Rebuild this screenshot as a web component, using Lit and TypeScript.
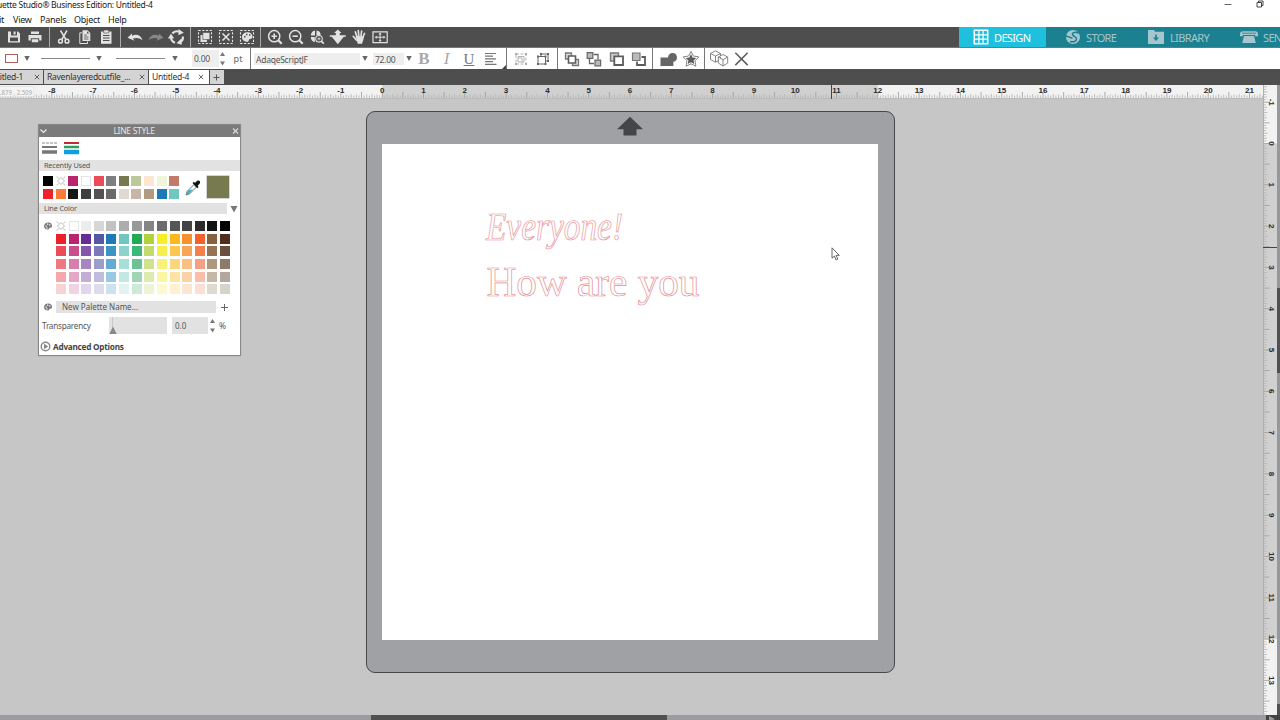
import { LitElement, html, svg, css } from "lit";
import { customElement, property } from "lit/decorators.js";

const UNIT = 41.3;

// Icon artwork on a 20x20 grid, drawn in currentColor.
const ICONS: Record<string, unknown> = {
  save: svg`<path fill="currentColor" fill-rule="evenodd" d="M4 4.500h10l2 2v9H4zM7 4.500v4h6v-4h-1.400v3h-2v-3zM6 10.500v3.800h8v-3.800z"/>`,
  print: svg`<path fill="currentColor" d="M6 4.500h8v2.500H6zM3.500 8h13v5.500h-2.300v-2.200H5.800v2.200H3.500zM6.800 12.300h6.400v3H6.800z"/>`,
  cut: svg`<g fill="none" stroke="currentColor" stroke-width="1.500"><path d="M6.500 3.500l5.700 9.500M13 3.500l-5.500 9.500"/><circle cx="6.500" cy="14.200" r="1.900"/><circle cx="13" cy="14.200" r="1.900"/></g>`,
  copy: svg`<path fill="currentColor" fill-rule="evenodd" d="M7.500 3.300h5l2.800 2.800V14H7.500zM12 4.300v2.300h2.300z"/><path fill="none" stroke="currentColor" d="M7 5.800H4.800v10.700h7.700v-2"/><path stroke="#4e4e4e" stroke-width=".8" d="M9 8h3M9 10h4.500M9 12h4.500"/>`,
  paste: svg`<path fill="currentColor" d="M5 4.500h10.500v12.300H5z"/><path fill="currentColor" stroke="#4e4e4e" stroke-width=".6" d="M7.700 3h5v3h-5z"/><path stroke="#4e4e4e" d="M7 8.500h6.500M7 11h6.500M7 13.500h6.500"/>`,
  undo: svg`<path fill="currentColor" d="M2.500 10.800L7 6.500v2.200c4.500-2 8.800-.5 10.500 4.600-3.200-2.700-6.500-2.800-9.500-1.700l1.500 2.200z"/>`,
  redo: svg`<path fill="currentColor" d="M17.500 10.800L13 6.500v2.200c-4.500-2-8.800-.5-10.500 4.600 3.200-2.700 6.500-2.800 9.500-1.700l-1.500 2.200z"/>`,
  sync: svg`<g fill="none" stroke="currentColor" stroke-width="2.200"><path d="M5.300 6.500A6 6 0 0 1 12 4.700M15.900 9.500a6 6 0 0 1-3.400 6M8 15.700a6 6 0 0 1-4-5.200"/></g><path fill="currentColor" d="M11.500 2l5.300 3.800-5.300 2.500zM14.300 11.500l-4.800 4.700 5.300 1.600zM.9 11.600l3-4.800 3.300 4.500z"/>`,
  selall: svg`<path fill="none" stroke="currentColor" stroke-width="1.100" stroke-dasharray="2.200 1.500" d="M3.500 3.500h13v13h-13z"/><path fill="currentColor" d="M5.500 8h6.500v7H5.500z"/><path fill="currentColor" stroke="#4e4e4e" stroke-width=".6" d="M7.800 5.500h7v7h-7z"/>`,
  selnone: svg`<path fill="none" stroke="currentColor" stroke-width="1.100" stroke-dasharray="2.200 1.500" d="M3.500 3.500h13v13h-13z"/><path stroke="currentColor" stroke-width="1.600" d="M6.500 6.500l7 7M13.500 6.500l-7 7"/>`,
  selcolor: svg`<path fill="none" stroke="currentColor" stroke-width="1.100" stroke-dasharray="2.200 1.500" d="M3.500 3.500h13v13h-13z"/><path fill="currentColor" fill-rule="evenodd" d="M5 10.200C5 7 7.500 5.200 10.500 5.200s5 2 5 4.500c0 1.800-1.200 2.200-2.500 2.200-1.600 0-.8 2.800-2.500 2.800C7.500 14.700 5 13 5 10.200zM7 9h1.500v1.500H7zM9 6.700h1.500v1.500H9zM12 7.200h1.500v1.500H12z"/>`,
  zoomin: svg`<g fill="none" stroke="currentColor"><circle cx="9.200" cy="9.200" r="5.600" stroke-width="1.500"/><path stroke-width="2.200" d="M13.300 13.300l3.400 3.400"/><path stroke-width="1.600" d="M6.500 9.200h5.400M9.200 6.500v5.400"/></g>`,
  zoomout: svg`<g fill="none" stroke="currentColor"><circle cx="9.200" cy="9.200" r="5.600" stroke-width="1.500"/><path stroke-width="2.200" d="M13.300 13.300l3.400 3.400"/><path stroke-width="1.600" d="M6.500 9.200h5.400"/></g>`,
  zoomsel: svg`<path fill="currentColor" d="M3.800 8.500c.2-2.700 1.500-4.500 4.200-5v5zM9.500 3.500c2.700.2 4 2 4.300 4.300L9.500 8.500zM3.800 10h4v5.200c-2.500-.7-3.800-2.300-4-5.200z"/><g fill="none" stroke="currentColor"><circle cx="12" cy="11.800" r="3.300" stroke-width="1.100"/><path stroke-width="1.700" d="M14.300 14.200l2.500 2.500"/><path stroke-width=".9" d="M10.500 11.800h3M12 10.300v3"/></g>`,
  drag: svg`<path fill="currentColor" d="M9.800 2.500l3.700 3.500h-1.700v2.200h6v1.600h-2L9.800 17.200 3.800 9.800h-2V8.200h6V6H6.100z"/>`,
  hand: svg`<path fill="none" stroke="currentColor" stroke-width="1.700" stroke-linecap="round" d="M8 10L6.300 4.800M9.800 9.500L9.300 3.500M12 9.500l.6-5.500M13.800 10.500l1.700-4M7.300 13L4.200 9.300"/><path fill="currentColor" d="M6.500 9.200h8.200c.2 3-.7 4.800-1.700 7.500H8.700z"/>`,
  fit: svg`<path fill="none" stroke="currentColor" stroke-width="1.200" d="M3 4.800h14.200v10.800H3z"/><path fill="none" stroke="currentColor" d="M5.500 10.200h9.200M10.100 6.200v8"/><path fill="currentColor" d="M4.800 10.200l2-1.500v3zM15.400 10.200l-2-1.500v3zM10.100 5.500l1.500 2h-3zM10.100 14.900l1.500-2h-3z"/>`,
  align: svg`<path fill="none" stroke="#777" stroke-width="1.200" d="M4 4.500h11M4 7.200h8M4 9.900h11M4 12.600h8M4 15.300h11.500"/>`,
  group: svg`<g fill="none" stroke="currentColor" stroke-width=".9"><path d="M5 5h10v10H5z" stroke-dasharray="3 1.500"/><path d="M7 9V7.500h6V13h-2M7 9h4v4H7z"/></g><path fill="currentColor" d="M4 4h2v2H4zM14 4h2v2h-2zM4 14h2v2H4zM14 14h2v2h-2z"/>`,
  ungroup: svg`<g fill="none" stroke="currentColor" stroke-width="1"><path d="M5 7.500h7.500V15H5zM8 7.500V5h7v7h-2.500"/></g><path fill="currentColor" d="M4 6.500h2v2H4zM11.500 6.500h2v2h-2zM4 14h2v2H4zM11.500 14h2v2h-2zM14 4h2v2h-2zM7 4h2v2H7zM14 11h2v2h-2z"/>`,
  front: svg`<g fill="#ddd" stroke="#777" stroke-width="1.300"><path d="M3.500 4h6v6h-6zM10.500 10.500h6v6h-6z"/><path fill="#fff" stroke="#5c5c5c" stroke-width="1.600" d="M6.500 7h7v7h-7z"/></g>`,
  back: svg`<g fill="none" stroke="#666" stroke-width="1.300"><path d="M9.500 5.500h4.500v5M5.500 10v4.500H10"/><path fill="#bbb" stroke-width="1.200" d="M3.200 3.700h5.600v5.600H3.200zM11 11.200h5.600v5.600H11z"/></g>`,
  fwd: svg`<path fill="#ccc" stroke="#777" stroke-width="1.300" d="M3.500 4h8v8h-8z"/><path fill="#fff" stroke="#5c5c5c" stroke-width="1.800" d="M7.300 7.300h8.700v8.700H7.300z"/>`,
  bwd: svg`<path fill="none" stroke="#5c5c5c" stroke-width="1.800" d="M12.500 8H16v8H8v-3.500"/><path fill="#bbb" stroke="#777" stroke-width="1.200" d="M3.500 4h7.500v7.500H3.500z"/>`,
  weld: svg`<path fill="#666" d="M1.500 8.500H9c.4-3 2-4.600 4.500-4.600a4.500 4.500 0 0 1 .9 8.900V17H1.500z"/>`,
  star: svg`<path fill="#fff" stroke="#777" stroke-width="1" stroke-linejoin="round" d="M10 1.500l2.700 5.200 6 1-4.200 4.300.9 6L10 15.300 4.600 18l.9-6L1.300 7.700l6-1z"/><path fill="#5c5c5c" d="M10 4.500l1.800 3.700 4 .6-2.900 2.800.7 4-3.600-1.900-3.600 1.900.7-4-2.900-2.800 4-.6z"/>`,
  cubes: svg`<g fill="#fff" stroke="#777" stroke-width=".9" stroke-linejoin="round"><path d="M1.500 4.500l5-2.700 5 2.700v6l-5 2.700-5-2.700zM1.500 4.500l5 2.600 5-2.600M6.500 7.100v6"/><path d="M9.300 8l4.700-2.500L18.700 8v6L14 17l-4.700-3zM9.300 8l4.700 2.700L18.700 8M14 10.700V17"/></g>`,
  cross: svg`<path stroke="#5c5c5c" stroke-width="1.600" d="M3.500 4l13 13M16.500 4l-13 13"/>`,
  design: svg`<path fill="none" stroke="currentColor" stroke-width="1.200" d="M7.900 3.700v12.600M12.100 3.700v12.600M3.700 7.900h12.600M3.700 12.100h12.600"/><path fill="none" stroke="currentColor" stroke-width="1.500" d="M3.300 3.300h13.400v13.400H3.300z"/>`,
  store: svg`<circle cx="10" cy="10" r="7" fill="currentColor"/><path fill="none" stroke="#1b808f" stroke-width="1.500" d="M3 9c3 .3 4 2 6.500 2M16 6.500c-3-2-7-1.300-6.500 1 .5 2 4.200 1.800 4 4.500-.2 2.300-3 3.500-6.500 2.500"/>`,
  library: svg`<path fill="currentColor" d="M2 3h6l1 1.800h9V17H2z"/><path fill="none" stroke="#1b808f" stroke-width="1.600" d="M10 7.500v4"/><path fill="#1b808f" d="M7 10.500h6l-3 3.500z"/>`,
  send: svg`<path fill="currentColor" d="M1 7.500C1 5 2 4.200 4 4.200h12c2 0 3 .8 3 3.300v1.700h-2.800V8H3.800v1.200H1zM5 9h10l1.800 7H3.200z"/><path stroke="#1b808f" stroke-width=".8" d="M3 6.200h14"/>`,
  palette: svg`<path fill="#777" fill-rule="evenodd" d="M2 10.500C2 6 5.500 3 10.500 3S18 6 18 10c0 3-2 3.300-4 3.300-2.500 0-1 3.700-3.800 3.700C5.500 17 2 14.500 2 10.500zM5 9h2.500v2.500H5zM8 5.200h2.500v2.500H8zM12.300 6.300h2.500v2.500h-2.500zM6.500 12.500H9V15H6.500z"/>`,
  none: svg`<path fill="#fff" stroke="#aaa" stroke-width="1.600" d="M10 3l7 7-7 7-7-7z"/><path stroke="#999" stroke-width="1.500" d="M1.500 1l4 4M18.500 1l-4 4M1.500 19l4-4M18.500 19l-4-4"/>`,
};

const icon = (name: string, size = 20, cls = "") =>
  html`<svg class="icon ${cls}" width=${size} height=${size} viewBox="0 0 20 20">${ICONS[name]}</svg>`;

const down = html`<svg class="icon" width="8" height="7" viewBox="0 0 8 7"><path fill="#666" d="M1.300 1h5.400L4 6z" /></svg>`;
const spin = html`<svg class="icon" width="7" height="16" viewBox="0 0 7 16"><path fill="#777" d="M1 5l2.500-4L6 5zM1 10.500h5l-2.500 4z" /></svg>`;

// Ruler strip with sixteenth-inch ticks; the span 0..12 is shaded.
@customElement("inch-ruler")
class InchRuler extends LitElement {
  @property({ type: Boolean }) vertical = false;
  @property({ type: Number }) from = 0;
  @property({ type: Number }) to = 12;
  @property({ type: Number }) origin = 0;
  @property({ type: Number }) marker = 0;
  @property({ type: Number }) length = 100;

  static styles = css`
    :host { display: block; }
    svg { display: block; }
    .num { font: bold 8px "Liberation Sans", Arial, sans-serif; fill: #2a2a2a; text-anchor: middle; }
    .coords { font: 7.500px "Noto Sans", sans-serif; fill: #aaa; }
  `;

  render() {
    const v = this.vertical;
    const ticks = [];
    const nums = [];
    for (let i = (this.from - 2) * 16; i <= this.to * 16; i++) {
      const p = this.origin + (i * UNIT) / 16;
      if (p < 0 || p > this.length) continue;
      const len = i % 8 === 0 ? 6.5 : i % 4 === 0 ? 4.5 : i % 2 === 0 ? 4 : 3;
      const shade = i % 8 === 0 ? "#999" : "#b2b2b2";
      ticks.push(v
        ? svg`<line x1="0" x2=${len} y1=${p} y2=${p} stroke=${shade} stroke-width=".8"/>`
        : svg`<line x1=${p} x2=${p} y1=${13.5 - len} y2="13.5" stroke=${shade} stroke-width=".8"/>`);
      if (i % 16 === 0 && i >= this.from * 16)
        nums.push(v
          ? svg`<text class="num" transform="translate(6.200 ${p}) rotate(90)">${i / 16}</text>`
          : svg`<text class="num" x=${p} y="8">${i / 16}</text>`);
    }
    const w = v ? 14 : this.length;
    const h = v ? this.length : 14;
    const span = 12 * UNIT;
    return html`<svg width=${w} height=${h}>
      <rect width=${w} height=${h} fill="#f2f2f2" />
      ${v
        ? svg`<rect y=${this.origin} width="14" height=${span} fill="#d0d0d0"/>`
        : svg`<rect x=${this.origin} width=${span} height="14" fill="#d0d0d0"/>`}
      ${ticks}
      ${v
        ? svg`<line x1=".5" x2=".5" y1="0" y2=${h} stroke="#b0b0b0"/><line x1="0" x2="14" y1=${this.marker} y2=${this.marker} stroke="#444"/>`
        : svg`<line x1="0" x2=${w} y1="13.5" y2="13.5" stroke="#bbb"/><line x1=${this.marker} x2=${this.marker} y1="0" y2="14" stroke="#444"/>
            <rect x="-1" y="1.5" width="35" height="10" fill="#f4f4f4" stroke="#ddd" stroke-width=".6"/><text class="coords" x="0" y="10" textLength="32" lengthAdjust="spacingAndGlyphs">.879 , 2.509</text>`}
      ${nums}
    </svg>`;
  }
}

const RECENT = [
  ["#000", "none", "#b9246f", "#fff", "#ec4c57", "#7d7f80", "#77794f", "#bcc79a", "#fde6d1", "#eff5d8", "#c27a6b"],
  ["#ee2329", "#fb7b38", "#151515", "#3e3e3e", "#555251", "#6a6a6a", "#e0d9cf", "#c7b5a6", "#b09a80", "#1d7ab9", "#70c7bf"],
];
const COLORS = [
  "icon none #fff #ececec #d6d6d6 #c2c2c2 #adadad #999 #858585 #6c6c6c #565656 #444 #2c2c2c #141414 #000",
  "gap #ec2027 #b9246f #662e94 #5556a5 #1d7ab9 #70c7bf #22a953 #b0d23b #f8ee23 #fcb81d #f7912d #f3622c #8a613d #50301c",
  "gap #ec4c57 #c84f8b #8556a9 #7a79b9 #3a94c5 #8dd3cb #3cb878 #c1dc6c #f8f04a #fdc650 #f8a656 #f4804f #957456 #6b5040",
  "gap #f0787f #d77fab #a585c2 #9e9bce #63abd4 #a7ddd8 #6cc396 #cfe38c #f9f276 #fdd57f #fabd82 #f6a082 #af9880 #8d7a6d",
  "gap #f5a7ab #e4a8c6 #c4aed6 #bfbcdf #98c8e3 #c3e8e4 #9fd5b5 #deebb0 #fbf6a2 #fee3a6 #fcd1a7 #f9bfa9 #c7b7a6 #b3a79e",
  "gap #fad2d4 #f0d3e2 #e1d6ea #dcdcec #cce2f1 #dff3f1 #cde9d8 #edf4d6 #fcf9cf #fef0d0 #fde6d1 #fbdfd4 #e0d9cf #d9d3ce",
].map((r) => r.split(" "));

@customElement("line-style-panel")
class LineStylePanel extends LitElement {
  static styles = css`
    :host { display: block; box-sizing: border-box; width: 203px; height: 232px; background: #fff; border: 1px solid #888; font: 8px "Noto Sans", "Open Sans", sans-serif; color: #555; }
    .icon { display: block; flex: none; }
    .head { height: 12px; background: #7b7b7b; color: #e6e6e6; display: grid; grid-template-columns: 9px 1fr 9px; align-items: center; text-align: center; font-size: 8.500px; line-height: 12px; letter-spacing: -0.3px; }
    .head span { padding-right: 11px; }
    .modes { height: 23px; display: flex; gap: 7px; padding: 5px 0 0 3px; box-sizing: border-box; }
    .bar { background: #e2e2e2; height: 11px; line-height: 11px; padding-left: 5px; font-size: 7.300px; letter-spacing: -0.17px; }
    .recent { display: flex; align-items: center; height: 32px; padding-left: 4px; box-sizing: border-box; }
    .swatches { display: grid; grid-auto-rows: 12.650px; }
    .swatches.few { grid-template-columns: repeat(11, 12.640px); padding-top: 3px; width: 139px; flex: none; }
    .swatches.all { grid-template-columns: repeat(15, 12.640px); padding: 7.200px 0 0 4.300px; height: 87px; box-sizing: border-box; }
    .sw { width: 10px; height: 10px; box-sizing: border-box; }
    .sw.white { border: 1px solid #e4e4e4; }
    .dropper { margin: 1px 0 0 3px; }
    .current { width: 22px; height: 22px; background: #77794f; margin-left: 6px; box-shadow: 0 0 0 0.500px #aaa; }
    .split { display: flex; align-items: center; height: 11px; }
    .split .bar { flex: none; width: 183px; }
    .split .icon { margin-left: 3px; }
    .name { display: flex; align-items: center; height: 12px; padding-left: 4px; }
    .field { background: #e2e2e2; margin-left: 3px; width: 154px; height: 12px; line-height: 12px; padding-left: 6px; }
    .plus { margin-left: 4px; }
    .trans { display: flex; align-items: center; height: 17px; margin-top: 4px; padding-left: 3px; }
    .tlabel { width: 67px; font-size: 8.200px; letter-spacing: -0.25px; }
    .slider { width: 58px; height: 17px; background: #e2e2e2; display: flex; align-items: flex-end; }
    .value { width: 33px; height: 17px; line-height: 18px; background: #e2e2e2; margin: 0 1px 0 5px; padding-left: 3px; font-size: 8px; }
    .pct { margin-left: 3px; font-size: 8.500px; letter-spacing: -1px; }
    .adv { display: flex; align-items: center; gap: 2px; height: 12px; margin-top: 6px; padding-left: 1px; font-weight: bold; color: #444; font-size: 8.200px; letter-spacing: -0.23px; }
  `;

  swatch(c: string) {
    if (c === "gap") return html`<span></span>`;
    if (c === "icon") return icon("palette", 10);
    if (c === "none") return icon("none", 10);
    return html`<span class="sw ${c === "#fff" ? "white" : ""}" style="background:${c}"></span>`;
  }

  render() {
    return html`
      <div class="head">
        <svg class="icon" width="9" height="8" viewBox="0 0 9 8"><path d="M1.500 2.500l3 3 3-3" fill="none" stroke="#eee" stroke-width="1.200" /></svg>
        <span>LINE STYLE</span>
        <svg class="icon" width="9" height="8" viewBox="0 0 9 8"><path d="M2 1.500l5 5M7 1.500l-5 5" stroke="#ddd" stroke-width="1.100" /></svg>
      </div>
      <div class="modes">
        <svg class="icon" width="15" height="13" viewBox="0 0 15 13"><path d="M0 1h15" stroke="#888" stroke-dasharray="3 1" /><path d="M0 5h15" stroke="#777" stroke-width="2" /><path d="M0 10h15" stroke="#777" stroke-width="3.500" /></svg>
        <svg class="icon" width="15" height="13" viewBox="0 0 15 13"><path d="M0 1h15" stroke="#c02a32" stroke-width="2" /><path d="M0 5h15" stroke="#2e9e5b" stroke-width="2.500" /><path d="M0 10h15" stroke="#109fdc" stroke-width="4.500" /></svg>
      </div>
      <div class="bar">Recently Used</div>
      <div class="recent">
        <div class="swatches few">${RECENT.flat().map((c) => this.swatch(c))}</div>
        <svg class="icon dropper" width="16" height="16" viewBox="0 0 16 16">
          <path d="M1 15l1-3.500L9 4.500 11.500 7l-7 7z" fill="#e9f7fa" stroke="#555" stroke-width=".8" />
          <path d="M1.500 14.500l.8-3 2-1.800h3.500l-3.600 4z" fill="#35b6c9" />
          <path d="M7.500 3l1.200-1 1.300.7L12.200.8c2-1 3.600.8 2.600 2.600L12.700 5.700 13.500 7l-1.200 1.200z" fill="#111" />
        </svg>
        <span class="current"></span>
      </div>
      <div class="split">
        <div class="bar">Line Color</div>
        <svg class="icon" width="8" height="8" viewBox="0 0 8 8"><path d="M.5 1h7L4 7.500z" fill="#777" /></svg>
      </div>
      <div class="swatches all">${COLORS.flat().map((c) => this.swatch(c))}</div>
      <div class="name">
        ${icon("palette", 10)}
        <div class="field">New Palette Name...</div>
        <svg class="icon plus" width="9" height="9" viewBox="0 0 9 9"><path d="M4.500 1v7M1 4.500h7" stroke="#666" /></svg>
      </div>
      <div class="trans">
        <span class="tlabel">Transparency</span>
        <div class="slider"><svg class="icon" width="10" height="17" viewBox="0 0 10 17"><path d="M3.500 0v12" stroke="#bbb" stroke-width=".7" /><path d="M.3 17L4 9.500 7.700 17z" fill="#888" /></svg></div>
        <div class="value">0.0</div>
        ${spin}<span class="pct">%</span>
      </div>
      <div class="adv">
        <svg class="icon" width="11" height="11" viewBox="0 0 11 11"><circle cx="5.500" cy="5.500" r="4.300" fill="#fff" stroke="#888" stroke-width="1.400" /><path d="M4 2.800l4.300 2.700L4 8.200z" fill="#888" /></svg>
        Advanced Options
      </div>`;
  }
}

const TOOLS = [
  { w: 50, items: ["save", "print"] },
  { w: 71, items: ["cut", "copy", "paste"] },
  { w: 70, items: ["undo", "redo", "sync"] },
  { w: 70, items: ["selall", "selnone", "selcolor"] },
  { w: 132, items: ["zoomin", "zoomout", "zoomsel", "drag", "hand", "fit"] },
];

@customElement("app-root")
class AppRoot extends LitElement {
  static styles = css`
    :host { display: block; width: 1280px; height: 720px; overflow: hidden; background: #fff; font: 9px "Noto Sans", "Open Sans", sans-serif; color: #222; }
    .app { height: 720px; display: grid; grid-template-rows: 12px 15px 21px 21px 16px 14px 616px 5px; }
    .app > * { min-width: 0; }
    .icon { display: block; flex: none; }
    .title { display: flex; justify-content: space-between; line-height: 10px; white-space: nowrap; }
    .title .name { margin-left: -3px; font-size: 8.500px; letter-spacing: -0.28px; }
    .winctl { display: flex; gap: 24px; padding: 0 16px 0 0; }
    .menu { display: flex; line-height: 16px; white-space: nowrap; letter-spacing: -0.25px; }
    .menu .edit { margin-left: -1px; width: 14px; }
    .menu .view { width: 27px; }
    .menu .panels { width: 34px; }
    .menu .object { width: 34px; }
    .tools { background: #4e4e4e; color: #e2e2e2; display: flex; justify-content: space-between; box-sizing: border-box; border-bottom: 1px solid #777; }
    .left { display: flex; }
    .grp { display: flex; justify-content: center; align-items: center; box-sizing: border-box; border-right: 1px solid #aaa; }
    .grp:last-child { border-right: none; }
    .grp .icon { margin: 0 0.500px; }
    .dim { color: #888; }
    .group { color: #aaa; }
    .modes { display: flex; width: 321px; background: #1b808f; color: #a5c6cc; overflow: hidden; font-size: 11px; }
    .mode { display: flex; align-items: center; flex: none; box-sizing: border-box; gap: 3px; padding-left: 12px; letter-spacing: -0.65px; }
    .mode.on { background: #1fc0dd; color: #fff; }
    .mode.m0 { width: 87px; } .mode.m1 { width: 83px; padding-left: 17px; } .mode.m2 { width: 92px; padding-left: 17px; gap: 4px; } .mode.m3 { width: 80px; padding-left: 18px; gap: 4px; }
    .opts { display: grid; align-items: center; justify-items: center; color: #666; font-size: 9px;
      grid-template-columns: 22px 10px 59px 16px 59px 18px 8px 27px 7px 24px 1px 109px 10px 34px 9px 22px 23px 22px 22px 4px 1px 3px 22px 22px 3px 1px 3px 22px 22px 23px 22px 2px 1px 5px 22px 22px 2px 1px 3px 22px 22px; }
    .vr { width: 1px; height: 21px; background: #777; }
    .rect { width: 11px; height: 7px; border: 1px solid #a8605c; box-sizing: content-box; justify-self: end; margin-right: 4px; }
    .rule { justify-self: end; }
    .field { justify-self: stretch; background: #eee; height: 12px; line-height: 13px; padding-left: 2px; margin-left: 3px; letter-spacing: -0.25px; font-size: 8.500px; color: #555; }
    .field.tall { height: 17px; line-height: 18px; margin-left: 0; }
    .ser { font-family: "Liberation Serif", serif; font-size: 17px; line-height: 20px; color: #777; }
    .b { font-weight: bold; color: #aaa; } .i { font-style: italic; color: #aaa; } .u { text-decoration: underline; font-size: 15px; }
    .corner { align-self: end; justify-self: end; }
    .tabs { background: #4e4e4e; display: flex; height: 15px; padding-top: 1px; color: #333; font-size: 8.500px; line-height: 14px; }
    .tab { display: flex; justify-content: space-between; box-sizing: border-box; background: #d4d4d4; height: 14px; margin-right: 1px; padding: 0 3px; white-space: nowrap; letter-spacing: -0.25px; }
    .tab .icon { margin-top: 4px; }
    .t1 { width: 43px; padding-left: 0; overflow: hidden; } .t1 span { margin-left: -3px; } .t2 { width: 104px; } .t3 { width: 60px; background: #fff; padding-right: 5px; } .t4 { width: 14px; padding: 0 3px; }
    .hrule { display: flex; background: #f2f2f2; }
    .work { display: grid; grid-template-columns: 1263px 14px 3px; grid-template-rows: 630px; margin-top: -14px; height: 630px; }
    .canvas { position: relative; }
    .ground { background: #c6c6c6; height: 616px; margin-top: 14px; }
    .mat { position: absolute; left: 366px; top: 26px; width: 529px; height: 562px; box-sizing: border-box; background: #a0a1a5; border: 1px solid #484848; border-radius: 9px; padding: 0 16px 0 15px; display: grid; grid-template-rows: 32px 496px; grid-template-columns: 496px; }
    .mat .arrow { justify-self: center; margin-top: 4px; display: block; }
    .page { background: #fff; }
    .page svg { display: block; }
    .art { fill: #fff; stroke: #e68e93; stroke-width: 0.7px; font-family: "Liberation Serif", "Times New Roman", serif; }
    .script { font-style: italic; }
    .panel { position: absolute; left: 38px; top: 39px; box-shadow: 0 0 1px #999; }
    .cursor { position: absolute; left: 831px; top: 162px; }
    .vbar { background: #97989b; display: flex; flex-direction: column; }
    .vgap { height: 203px; } .vthumb { height: 85px; background: #505050; } .vrest { height: 331px; } .vend { height: 11px; background: #505050; }
    .hbar { background: #9b9c9f; display: flex; }
    .hgap { width: 371px; } .hthumb { width: 296px; background: #505050; } .hrest { width: 599px; }
    .hend { width: 14px; background: #444; display: flex; }
  `;

  render() {
    const x = html`<svg class="icon" width="6" height="6" viewBox="0 0 6 6"><path d="M.8.8l4.400 4.400M5.200.8L.8 5.200" stroke="#555" stroke-width=".9" /></svg>`;
    const vr = html`<span class="vr"></span>`;
    const line = html`<svg class="icon rule" width="50" height="3"><path d="M0 1.500h49" stroke="#888" stroke-width="1.200" /></svg>`;
    const modes = [["design", "DESIGN"], ["store", "STORE"], ["library", "LIBRARY"], ["send", "SEND"]];
    return html`<div class="app">
      <div class="title">
        <span class="name">uette Studio® Business Edition: Untitled-4</span>
        <div class="winctl">
          <svg class="icon" width="8" height="9"><path d="M.5 4.500h7" stroke="#555" stroke-width=".9" /></svg>
          <svg class="icon" width="8" height="9" viewBox="0 0 8 9"><path d="M1 2.500h4.500v4.500H1zM2.500 2.500V1H7v4.500H5.500" fill="none" stroke="#333" stroke-width=".9" /></svg>
        </div>
      </div>
      <div class="menu"><span class="edit">it</span><span class="view">View</span><span class="panels">Panels</span><span class="object">Object</span><span>Help</span></div>
      <div class="tools">
        <div class="left">
          ${TOOLS.map((g) => html`<div class="grp" style="width:${g.w}px">${g.items.map((n) => icon(n, 20, n === "redo" ? "dim" : ""))}</div>`)}
        </div>
        <div class="modes">${modes.map(([n, t], i) => html`<div class="mode m${i} ${i === 0 ? "on" : ""}">${icon(n)}<span>${t}</span></div>`)}</div>
      </div>
      <div class="opts">
        <span class="rect"></span>${down}${line}${down}${line}${down}<span></span>
        <span class="field tall">0.00</span>${spin}<span>pt</span>${vr}
        <span class="field">AdaqeScriptJF</span>${down}<span class="field">72.00</span>${down}
        <span class="ser b">B</span><span class="ser i">I</span><span class="ser u">U</span>${icon("align")}
        <svg class="icon corner" width="4" height="4"><path d="M4 0v4H0z" fill="#444" /></svg>${vr}<span></span>
        ${icon("group", 20, "group")}${icon("ungroup", 20)}<span></span>${vr}<span></span>
        ${["front", "back", "fwd", "bwd"].map((n) => icon(n, 20))}<span></span>${vr}<span></span>
        ${icon("weld", 20)}${icon("star", 18)}<span></span>${vr}<span></span>
        ${icon("cubes")}${icon("cross", 19)}
      </div>
      <div class="tabs">
        <div class="tab t1"><span>titled-1</span>${x}</div>
        <div class="tab t2"><span>Ravenlayeredcutfile_...</span>${x}</div>
        <div class="tab t3"><span>Untitled-4</span>${x}</div>
        <div class="tab t4"><svg class="icon" width="7" height="7" viewBox="0 0 7 7"><path d="M3.500.5v6M.5 3.500h6" stroke="#555" /></svg></div>
      </div>
      <div class="hrule"><inch-ruler from="-8" to="22" origin="382.200" marker="831.500" length="1263"></inch-ruler></div>
      <div class="work">
        <div class="canvas">
          <div class="ground"></div>
          <div class="mat">
            <svg class="arrow" width="26" height="20" viewBox="0 0 26 20"><path d="M13 .7L26 13.200h-6.500V19.500h-13v-6.300H0z" fill="#444547" /></svg>
            <div class="page">
              <svg width="496" height="200">
                <text class="art script" x="104" y="96" font-size="39" textLength="137" lengthAdjust="spacingAndGlyphs">Everyone!</text>
                <text class="art" x="104.500" y="151.500" font-size="41.500" textLength="213" lengthAdjust="spacingAndGlyphs">How are you</text>
              </svg>
            </div>
          </div>
          <line-style-panel class="panel"></line-style-panel>
          <svg class="cursor" width="10" height="14" viewBox="0 0 10 14"><path d="M1 .8v10.400l2.400-2.200 1.700 4 1.700-.8-1.700-3.800h3.200z" fill="#fff" stroke="#444" stroke-width=".8" /></svg>
        </div>
        <inch-ruler vertical from="-1" to="14" origin="58.500" marker="162.500" length="630"></inch-ruler>
        <div class="vbar"><div class="vgap"></div><div class="vthumb"></div><div class="vrest"></div><div class="vend"></div></div>
      </div>
      <div class="hbar"><div class="hgap"></div><div class="hthumb"></div><div class="hrest"></div><div class="hend"><svg class="icon" width="10" height="5"><path d="M3 1l6 3-6 3z" fill="#999" /></svg></div></div>
    </div>`;
  }
}
